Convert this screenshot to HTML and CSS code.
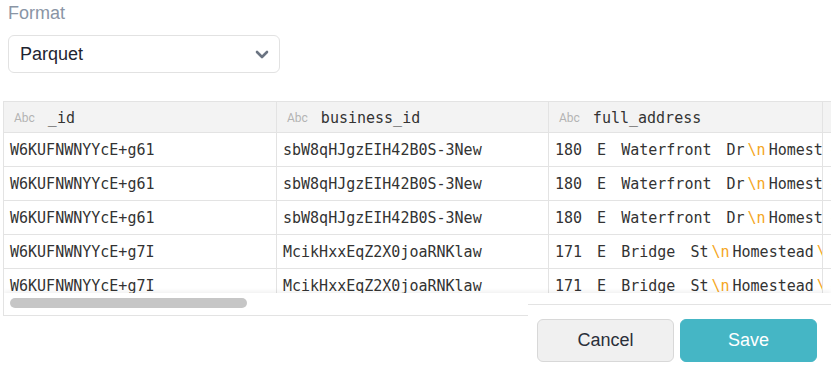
FILE: index.html
```html
<!DOCTYPE html>
<html lang="en">
<head>
    <meta charset="UTF-8">
    <meta name="viewport" content="width=device-width, initial-scale=1.0">
    <title>Export</title>
    <link rel="stylesheet" href="styles.css">
</head>
<body>
    <div class="page">
        <div class="field">
            <label class="field-label" for="format">Format</label>
            <div class="select" id="format">
                <span>Parquet</span>
                <svg class="chevron" width="14" height="9" viewBox="0 0 14 9">
                    <polyline points="2,2 7,7 12,2" fill="none" stroke="#6b7482" stroke-width="2.6" stroke-linecap="round" stroke-linejoin="round"/>
                </svg>
            </div>
        </div>

        <div class="table-wrap">
            <div class="grid">
                <div class="th"><span class="type">Abc</span>_id</div>
                <div class="th"><span class="type">Abc</span>business_id</div>
                <div class="th"><span class="type">Abc</span>full_address</div>
                <div class="th"><span class="type">Abc</span>latitude</div>

                <div class="td">W6KUFNWNYYcE+g61</div>
                <div class="td">sbW8qHJgzEIH42B0S-3New</div>
                <div class="td addr">180 E Waterfront Dr<span class="nl">\n</span>Homestead<span class="nl">\n</span>PA</div>
                <div class="td">-79.9</div>

                <div class="td">W6KUFNWNYYcE+g61</div>
                <div class="td">sbW8qHJgzEIH42B0S-3New</div>
                <div class="td addr">180 E Waterfront Dr<span class="nl">\n</span>Homestead<span class="nl">\n</span>PA</div>
                <div class="td">-79.9</div>

                <div class="td">W6KUFNWNYYcE+g61</div>
                <div class="td">sbW8qHJgzEIH42B0S-3New</div>
                <div class="td addr">180 E Waterfront Dr<span class="nl">\n</span>Homestead<span class="nl">\n</span>PA</div>
                <div class="td">-79.9</div>

                <div class="td">W6KUFNWNYYcE+g7I</div>
                <div class="td">McikHxxEqZ2X0joaRNKlaw</div>
                <div class="td addr">171 E Bridge St<span class="nl">\n</span>Homestead<span class="nl">\n</span>PA</div>
                <div class="td">-79.9</div>

                <div class="td">W6KUFNWNYYcE+g7I</div>
                <div class="td">McikHxxEqZ2X0joaRNKlaw</div>
                <div class="td addr">171 E Bridge St<span class="nl">\n</span>Homestead<span class="nl">\n</span>PA</div>
                <div class="td">-79.9</div>
            </div>
            <div class="hscroll"><div class="thumb"></div></div>
        </div>

        <div class="footer">
            <button class="btn btn-cancel">Cancel</button>
            <button class="btn btn-save">Save</button>
        </div>
    </div>
</body>
</html>
```

FILE: styles.css
```css
body {
    margin: 0;
    font-family: "Liberation Sans", Arial, sans-serif;
    background: #fff;
    overflow: hidden;
}

.page {
    position: relative;
    width: 831px;
    height: 370px;
}

.field {
    padding: 1px 8px 0;
}

.field-label {
    display: block;
    font-size: 18px;
    line-height: 24px;
    color: #8a95a5;
}

.select {
    margin-top: 10px;
    width: 272px;
    height: 38px;
    box-sizing: border-box;
    border: 1px solid #e2e2e2;
    border-radius: 6px;
    display: flex;
    align-items: center;
    justify-content: space-between;
    padding: 0 10px 0 11px;
    font-size: 18px;
    color: #1f2430;
}

.table-wrap {
    position: relative;
    margin: 28px 0 0 3px;
    height: 215px;
    box-sizing: border-box;
    border-top: 1px solid #e3e3e3;
    border-left: 1px solid #e3e3e3;
    border-bottom: 1px solid #e3e3e3;
    overflow: hidden;
}

.grid {
    display: grid;
    grid-template-columns: 273px 272px 274px 200px;
    grid-auto-rows: 34px;
    grid-template-rows: 31px;
    font-family: "DejaVu Sans Mono", monospace;
    font-size: 15px;
    color: #333;
}

.th,
.td {
    box-sizing: border-box;
    border-right: 1px solid #e3e3e3;
    border-bottom: 1px solid #e3e3e3;
    display: flex;
    align-items: center;
    white-space: nowrap;
    overflow: hidden;
}

.th {
    background: #f3f3f3;
    padding: 2px 0 0 10px;
}

.td {
    padding-left: 6px;
    padding-top: 1px;
}

.type {
    font-family: Roboto, sans-serif;
    font-size: 12px;
    color: #b3b3b3;
    margin-right: 13px;
}

.addr {
    word-spacing: 6px;
}

.nl {
    color: #f5a623;
    margin: 0 3px;
}

.hscroll {
    position: absolute;
    left: 0;
    right: 0;
    bottom: 0;
    height: 22px;
    background: #fff;
    box-shadow: 0 -2px 4px rgba(0, 0, 0, 0.06);
}

.thumb {
    margin: 5px 0 0 6px;
    width: 237px;
    height: 10px;
    border-radius: 5px;
    background: #c6c6c6;
}

.footer {
    position: absolute;
    right: 0;
    bottom: 0;
    width: 303px;
    height: 66px;
    box-sizing: border-box;
    background: #fff;
    border-top: 1px solid #e3e3e3;
    display: flex;
    justify-content: flex-end;
    gap: 6px;
    padding: 14px 14px 0 0;
}

.btn {
    width: 137px;
    height: 43px;
    border-radius: 6px;
    font-family: "Liberation Sans", Arial, sans-serif;
    font-size: 18px;
    cursor: pointer;
}

.btn-cancel {
    background: #f0f0f0;
    border: 1px solid #d8d8d8;
    color: #2a2f3a;
}

.btn-save {
    background: #45b6c5;
    border: 1px solid #45b6c5;
    color: #fff;
}
```
